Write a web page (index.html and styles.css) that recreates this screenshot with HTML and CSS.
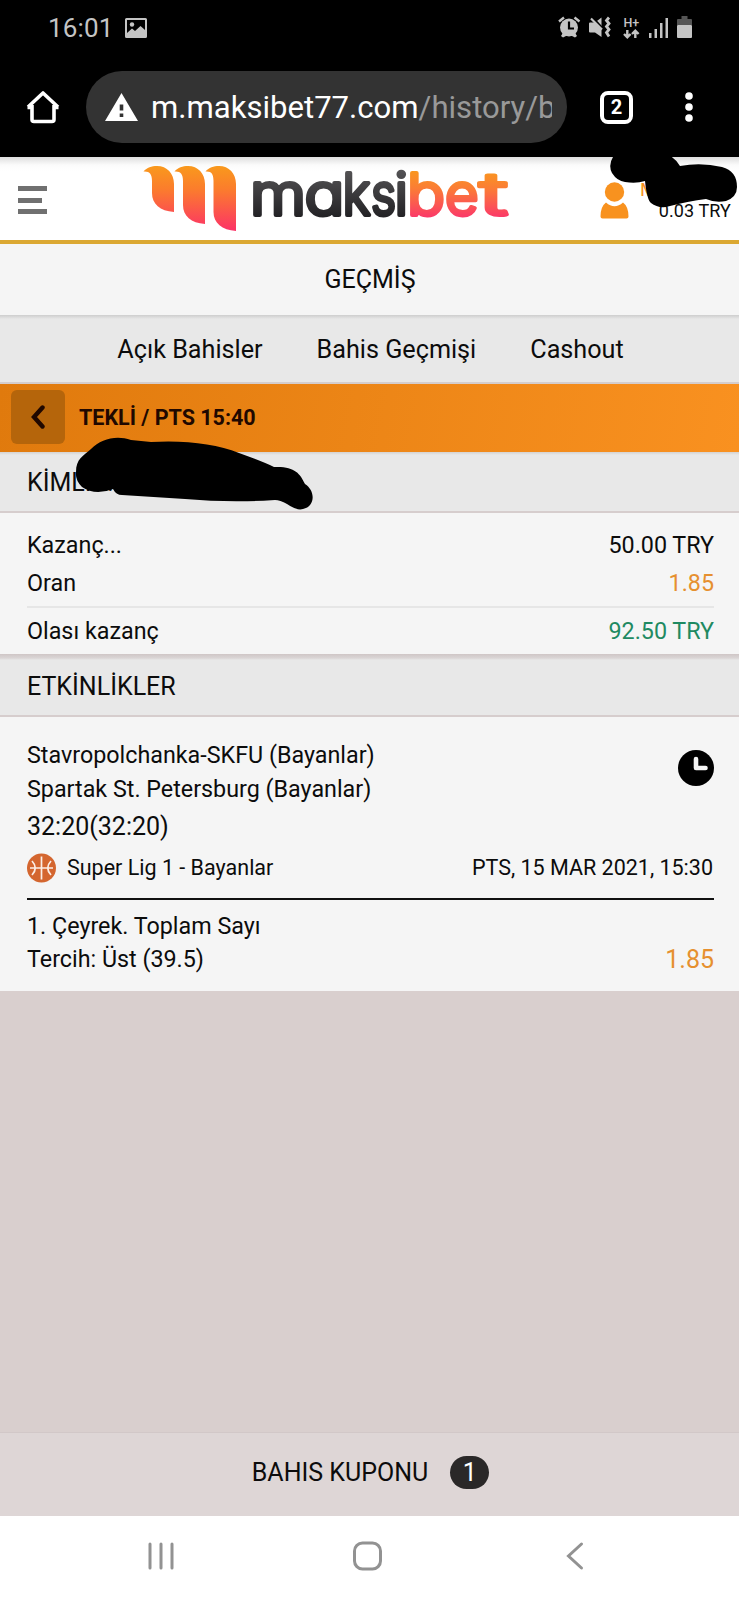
FILE: index.html
```html
<!DOCTYPE html>
<html lang="tr">
<head>
<meta charset="utf-8">
<title>Geçmiş</title>
<link rel="stylesheet" href="styles.css">
</head>
<body>
<div class="status">
  <span class="clock">16:01</span>
  <svg class="pic" width="22" height="20" viewBox="0 0 22 20"><path fill="#c4c4c4" fill-rule="evenodd" d="M1.500 0h19A1.500 1.500 0 0 1 22 1.500V18.500a1.500 1.500 0 0 1-1.500 1.500H1.500A1.500 1.500 0 0 1 0 18.500V1.500A1.500 1.500 0 0 1 1.500 0ZM2 2v13l5-4.500 3 2.500 5.500-5L20 12V2Z"/><circle cx="7" cy="6.500" r="2.200" fill="#c4c4c4"/></svg>
  <svg class="sys" width="136" height="24" viewBox="557 16 136 24">
    <g fill="#c4c4c4" stroke="none">
      <circle cx="569" cy="27.500" r="9"/><path d="M561 36l3-5 4 4-5 2.500zM577 36l-3-5-4 4 5 2.500z"/>
      <path d="M589 23.500q0-1 1-1h5l6.500-5V37l-6.500-4.500h-5q-1 0-1-1z"/>
      <rect x="649" y="33" width="2.500" height="5"/><rect x="654.500" y="29" width="2.500" height="9"/><rect x="660" y="23" width="2.500" height="15"/><rect x="665.500" y="18" width="2.500" height="20"/>
      <rect x="677" y="25" width="15" height="13" rx="1"/>
    </g>
    <path fill="#555" d="M677 25v-5q0-1 1-1h3.500v-3h6v3h3.500q1 0 1 1v5z"/>
    <g fill="none" stroke="#c4c4c4" stroke-width="2.400">
      <path d="M559 21.500l5-4M574.500 17.500l5 4"/>
      <path stroke-width="2.800" d="M609 17.500l-2.500 3 2.500 3-2.500 3 2.500 3-2.500 3 2.500 4"/>
      <path d="M627.300 30v7M624 34l3.300 3.300 3.300-3.300M635.300 38v-7M632 34l3.300-3.300 3.300 3.300"/>
    </g>
    <path d="M569 21.500v7h5" fill="none" stroke="#000" stroke-width="2.200"/>
    <path d="M593 18l10 11" fill="none" stroke="#000" stroke-width="2.500"/>
    <path d="M591 18.500l11 11" fill="none" stroke="#c4c4c4" stroke-width="2.200"/>
    <text x="623.500" y="26.500" class="net">H+</text>
  </svg>
</div>

<div class="browser">
  <svg class="home" width="34" height="34" viewBox="0 0 34 34"><path fill="none" stroke="#fff" stroke-width="3.600" stroke-linejoin="round" d="M1.500 17.500H6M32.500 17.500H28M2 17 17 3 32 17M6 15V29.500q0 2 2 2H26q2 0 2-2V15"/></svg>
  <div class="pill">
    <svg width="33" height="28" viewBox="0 0 33 28"><path fill="#fff" fill-rule="evenodd" d="M16.500 0 33 28H0ZM14.700 11.500v6h3.600v-6ZM14.700 20.500v3.500h3.600v-3.500Z"/></svg>
    <div class="url">m.maksibet77.com<span>/history/b</span></div>
  </div>
  <div class="tabcount">2</div>
  <svg class="dots" width="8" height="30" viewBox="0 0 8 30"><g fill="#fff"><circle cx="4" cy="4" r="3.800"/><circle cx="4" cy="15" r="3.800"/><circle cx="4" cy="26" r="3.800"/></g></svg>
</div>

<header class="top">
  <div class="burger"><i></i><i></i><i></i></div>
  <svg class="logo" width="370" height="70" viewBox="142 163 370 70">
    <defs>
      <linearGradient id="flame" gradientUnits="userSpaceOnUse" x1="0" y1="166" x2="0" y2="231"><stop offset="0" stop-color="#f9991c"/><stop offset=".35" stop-color="#fb7d2c"/><stop offset="1" stop-color="#fc3267"/></linearGradient>
      <linearGradient id="warm" gradientUnits="userSpaceOnUse" x1="0" y1="169" x2="0" y2="217"><stop offset="0" stop-color="#f9991c"/><stop offset=".4" stop-color="#fb7d35"/><stop offset="1" stop-color="#fb3a68"/></linearGradient>
      <linearGradient id="dark" gradientUnits="userSpaceOnUse" x1="0" y1="169" x2="0" y2="217"><stop offset="0" stop-color="#555456"/><stop offset="1" stop-color="#232225"/></linearGradient>
    </defs>
    <g fill="url(#flame)">
      <path d="M143.500 171.500C147 167.500 151.500 166 157 166c10 0 17 7.500 17 18v28c-14-1-22-8-22-19v-12c0-7-2.500-10-8.500-9.500z"/>
      <path d="M174.500 171.500C178 167.500 182.500 166 188 166c10 0 17 7.500 17 18v40c-14-1-22-8-22-19v-24c0-7-2.500-10-8.500-9.500z"/>
      <path d="M205.500 171.500C209 167.500 213.500 166 219 166c10 0 17 7.500 17 18v47c-14-1-22.500-8-22.500-19v-31c0-7-2-10-8-9.500z"/>
    </g>
    <text class="word" y="215"><tspan fill="url(#dark)" stroke="url(#dark)"><tspan x="250" textLength="56" lengthAdjust="spacingAndGlyphs">m</tspan><tspan x="304.500" textLength="40" lengthAdjust="spacingAndGlyphs">a</tspan><tspan x="342.500" textLength="28" lengthAdjust="spacingAndGlyphs">k</tspan><tspan x="371" textLength="25" lengthAdjust="spacingAndGlyphs">s</tspan><tspan x="394.500">i</tspan></tspan><tspan fill="url(#warm)" stroke="url(#warm)"><tspan x="407" textLength="38" lengthAdjust="spacingAndGlyphs">b</tspan><tspan x="445">e</tspan><tspan x="479.500" textLength="28" lengthAdjust="spacingAndGlyphs">t</tspan></tspan></text>
  </svg>
  <svg class="user" width="29" height="37" viewBox="0 0 29 37"><g fill="#f8921f"><circle cx="14.500" cy="10" r="9.700"/><path d="M6 20.500q8.500 7.500 17 0 5.500 4 5.500 14 0 2-2 2h-24q-2 0-2-2Q.5 24.500 6 20.500z"/></g></svg>
  <div class="account"><span class="name">M</span><span>0.03 TRY</span></div>
  <svg class="scribble-a" width="130" height="52" viewBox="609 156 130 52"><path d="M613 156Q608 164 612 172q5 8 13 9 11 2 20-1 2 19 6 22 6 5 15 4 23-6 40-8 9 4 20 2 11-4 11-14 0-16-15-20-21-5-42-1-5-9-16-13z"/></svg>
</header>

<h1 class="pagetitle">GEÇMİŞ</h1>
<nav class="tabs"><span>Açık Bahisler</span><span>Bahis Geçmişi</span><span>Cashout</span></nav>
<div class="betbar">
  <button class="back"><svg width="14" height="24" viewBox="0 0 14 24"><path d="M11.500 2.500 3 12l8.500 9.500" fill="none" stroke="#200800" stroke-width="4.400" stroke-linecap="round"/></svg></button>
  <b>TEKLİ / PTS 15:40</b>
</div>
<div class="section ident">KİMLİK:
  <svg class="scribble-b" width="240" height="74" viewBox="75 437 240 74"><path d="M76 472c0-13 7-16 15-23 10-10 25-14 40-9l20 2c35-2 65 2 88 11q25 9 35 14c20-1 26 6 31 17 11 7 10 23-2 25q-6 2-16-5-7-4-12-4-45 3-90-1l-63-4q-6 0-9-6-18 7-31-2-7-7-6-15z"/></svg>
</div>

<section class="money">
  <div class="row"><span>Kazanç...</span><span>50.00 TRY</span></div>
  <div class="row"><span>Oran</span><span class="odd">1.85</span></div>
  <div class="row win"><span>Olası kazanç</span><span>92.50 TRY</span></div>
</section>

<div class="section events">ETKİNLİKLER</div>
<section class="event">
  <div class="teams">
    <div><p>Stavropolchanka-SKFU (Bayanlar)</p><p>Spartak St. Petersburg (Bayanlar)</p></div>
    <svg width="36" height="36" viewBox="0 0 36 36"><circle cx="18" cy="18" r="18"/><path d="M18 9v9h9.500" fill="none" stroke="#f5f5f5" stroke-width="4.600" stroke-linecap="round" stroke-linejoin="round"/></svg>
  </div>
  <p class="score">32:20(32:20)</p>
  <div class="league">
    <svg width="30" height="30" viewBox="0 0 30 30"><circle cx="14.500" cy="15" r="14.500" fill="#d4662f"/><path d="M14.500 3.500v23M3 15h23M5 8q6.500 7 0 14M24 8q-6.500 7 0 14" fill="none" stroke="#fbeee6" stroke-width="1.700"/></svg>
    <span>Super Lig 1 - Bayanlar</span><time>PTS, 15 MAR 2021, 15:30</time>
  </div>
  <div class="pick"><div><p>1. Çeyrek. Toplam Sayı</p><p>Tercih: Üst (39.5)</p></div><span class="odd">1.85</span></div>
</section>

<main class="empty"></main>
<div class="coupon"><span>BAHIS KUPONU</span><span class="badge">1</span></div>
<div class="navbar">
  <svg width="28" height="30" viewBox="0 0 28 30"><path d="M2 3v24M13 3v24M24 3v24" stroke="#929292" stroke-width="3" stroke-linecap="round"/></svg>
  <svg width="30" height="30" viewBox="0 0 30 30"><rect x="1.500" y="2" width="26" height="26" rx="8" fill="none" stroke="#929292" stroke-width="3"/></svg>
  <svg width="18" height="30" viewBox="0 0 18 30"><path d="M15.500 3 2.500 15l13 12" fill="none" stroke="#929292" stroke-width="3" stroke-linecap="round"/></svg>
</div>
</body>
</html>
```
FILE: styles.css
```css
* { box-sizing: border-box; margin: 0; padding: 0; }
body {
  width: 739px; height: 1600px; overflow: hidden;
  display: flex; flex-direction: column;
  font-family: Roboto, "Liberation Sans", sans-serif;
  color: #0c0c0c; background: #d9cfce;
}
body > * { flex: none; }
svg { display: block; flex: none; }

.status { height: 56px; background: #000; color: #c4c4c4; display: flex; align-items: center; padding: 0 46px 0 48px; }
.clock { font-size: 26px; letter-spacing: .15px; width: 77px; }
.sys { margin-left: auto; }
.net { font: 500 12.500px Roboto, sans-serif; fill: #c4c4c4; }

.browser { height: 101px; background: #000; display: flex; align-items: center; padding: 1px 46px 0 26px; }
.home { margin-right: 26px; }
.pill { width: 481px; height: 72px; border-radius: 36px; background: #333; display: flex; align-items: center; gap: 13px; padding: 0 15px 0 19px; }
.url { flex: 1; overflow: hidden; white-space: nowrap; font-size: 31.100px; line-height: 44px; padding-top: 2px; color: #fff; }
.url span { color: #999; }
.tabcount { width: 33px; height: 33px; margin-left: 33px; border: 4px solid #fff; border-radius: 8px; color: #fff; font-size: 20px; font-weight: 700; line-height: 25px; text-align: center; }
.dots { margin-left: auto; }

.top { position: relative; height: 87px; border-bottom: 4px solid #dba832; background: linear-gradient(#dedede, #fbfbfb 8px, #fff 14px); display: flex; align-items: flex-start; padding: 6px 8px 0 18px; }
.burger { width: 29px; display: flex; flex-direction: column; gap: 6.500px; margin-top: 23px; }
.burger i { height: 5px; background: #707070; }
.burger i:nth-child(2) { width: 24px; }
.logo { margin-left: 95px; overflow: visible; }
.word { font-family: Inter, sans-serif; font-size: 58px; font-weight: 300; font-feature-settings: "cv11" 1; stroke-width: 4px; stroke-linejoin: round; }
.user { margin: 19px 0 0 88px; }
.account { flex: 1; display: flex; flex-direction: column; align-items: flex-end; font-size: 18px; line-height: 22px; padding-top: 17px; white-space: nowrap; letter-spacing: .1px; }
.account .name { align-self: flex-start; margin-left: 11px; color: #f8921f; font-size: 19px; line-height: 20px; }
.scribble-a { position: absolute; right: 0; top: 0; filter: blur(.5px); }

.pagetitle { height: 71px; background: #f5f5f5; text-align: center; font-size: 25px; font-weight: 400; line-height: 71px; padding-left: 1px; }
.tabs { height: 69px; border-bottom: 2px solid #d5cdcc; background: linear-gradient(#cecece, #e8e8e8 4px); display: flex; justify-content: center; gap: 54px; font-size: 25.200px; line-height: 69px; padding-left: 2px; }
.betbar { height: 68px; background: linear-gradient(100deg, #e07a0d, #f99120); display: flex; align-items: center; padding-left: 11px; color: #200800; }
.back { width: 54px; height: 54px; border: 0; border-radius: 6px; background: #b5650b; display: flex; align-items: center; justify-content: center; margin: -2px 14px 0 0; }
.betbar b { font-size: 21.500px; margin-top: -1px; }
.section { position: relative; padding-left: 27px; font-size: 25px; background: #e8e8e8; border-bottom: 2px solid #d6cdcd; }
.ident { height: 61px; line-height: 61px; background: linear-gradient(#d4d2d0, #e8e8e8 3px); }
.scribble-b { position: absolute; left: 75px; top: -15px; filter: blur(.5px); z-index: 1; }
.events { height: 63px; line-height: 65px; background: linear-gradient(#cfc6c6, #dad5d5 4px, #e8e8e8 6px); }

.money { height: 141px; background: #f5f5f5; padding: 13px 25px 0 27px; font-size: 23.300px; }
.row { display: flex; justify-content: space-between; height: 38px; line-height: 38px; }
.odd { color: #e6902f; }
.win { margin-top: 4px; border-top: 2px solid #e6e6e6; height: 48px; line-height: 46px; }
.win span + span { color: #1f8a62; }

.event { height: 274px; background: #f5f5f5; padding: 21px 25px 0 27px; font-size: 23.300px; line-height: 34px; }
.teams { display: flex; justify-content: space-between; height: 69px; }
.teams svg { margin-top: 12px; }
.score { font-size: 25px; height: 40px; line-height: 39px; }
.league { display: flex; align-items: center; height: 41px; font-size: 21.500px; }
.league span { margin-left: 10px; }
.league time { margin-left: auto; padding-right: 1px; }
.pick { margin-top: 10px; border-top: 2px solid #111; padding-top: 10px; display: flex; justify-content: space-between; align-items: flex-end; line-height: 33px; }
.pick .odd { font-size: 25px; }

.empty { height: 442px; background: #d9cfce; border-bottom: 1px solid #d2c8c8; }
.coupon { height: 83px; background: #ded6d6; display: flex; align-items: center; justify-content: center; font-size: 25px; gap: 22px; padding: 0 0 4px 2px; }
.badge { width: 39px; height: 33px; border-radius: 17px; background: #2a2828; color: #fff; text-align: center; line-height: 33px; }
.navbar { height: 84px; background: #fff; display: flex; padding: 25px 155px 0 148px; }
.navbar svg:nth-child(2) { margin: 0 auto 0 177px; }
```
